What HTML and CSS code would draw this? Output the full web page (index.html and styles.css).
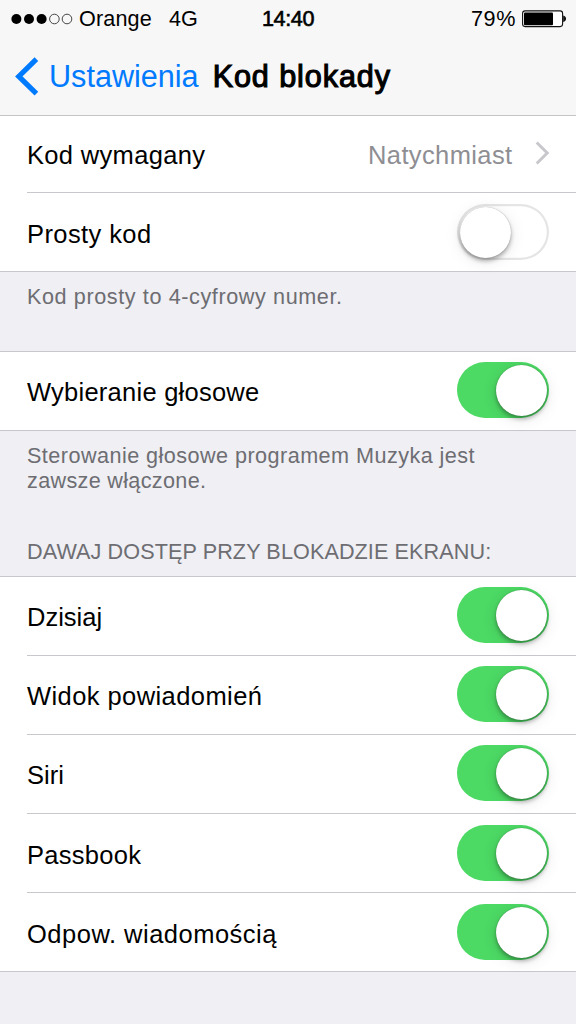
FILE: index.html
```html
<!DOCTYPE html>
<html lang="pl">
<head>
<meta charset="utf-8">
<title>Kod blokady</title>
<link rel="stylesheet" href="styles.css">
</head>
<body>
<header class="top">
  <div class="status">
    <div class="carrier">
      <svg class="signal" width="62" height="14" viewBox="0 0 62 14"><g fill="#000"><circle cx="5.4" cy="7" r="5"/><circle cx="18" cy="7" r="5"/><circle cx="30.6" cy="7" r="5"/></g><g fill="none" stroke="#333" stroke-width=".9"><circle cx="43.4" cy="7" r="4.8"/><circle cx="56" cy="7" r="4.8"/></g></svg>
      <span class="operator">Orange</span><span class="network">4G</span>
    </div>
    <span class="time">14:40</span>
    <div class="power">
      <span class="percent">79%</span>
      <svg width="45" height="18" viewBox="0 0 45 18"><rect x=".6" y=".9" width="40" height="15.7" rx="2.5" fill="#fff" stroke="#111" stroke-width="1.1"/><rect x="2" y="2.4" width="29" height="12.8" rx="1" fill="#000"/><path d="M41.2 5.5C45 6 45 11.5 41.2 12Z" fill="#111"/></svg>
    </div>
  </div>
  <nav class="nav">
    <svg class="back-icon" width="24" height="40" viewBox="0 0 24 40"><path d="M21.4 2.2 3.8 19.4 21.4 36.6" fill="none" stroke="#007aff" stroke-width="5.2"/></svg>
    <a class="back">Ustawienia</a>
    <h1 class="title">Kod blokady</h1>
  </nav>
</header>
<main>
  <section class="group first">
    <div class="row short"><span class="label l1">Kod wymagany</span><span class="value">Natychmiast</span><svg class="chevron" width="16" height="24" viewBox="0 0 16 24"><path d="M1.7 1.5 12.2 12 1.7 22.5" fill="none" stroke="#c7c7cc" stroke-width="3"/></svg></div>
    <div class="row"><span class="label l2">Prosty kod</span><span class="switch"><i class="knob"></i></span></div>
  </section>
  <p class="note small"><span class="n1">Kod prosty to 4-cyfrowy numer.</span></p>
  <section class="group">
    <div class="row"><span class="label l3">Wybieranie głosowe</span><span class="switch on"><i class="knob"></i></span></div>
  </section>
  <div class="between">
    <p class="note"><span class="n2">Sterowanie głosowe programem Muzyka jest</span><br><span class="n3">zawsze włączone.</span></p>
    <h2 class="heading">DAWAJ DOSTĘP PRZY BLOKADZIE EKRANU:</h2>
  </div>
  <section class="group">
    <div class="row"><span class="label l4">Dzisiaj</span><span class="switch on"><i class="knob"></i></span></div>
    <div class="row"><span class="label l5">Widok powiadomień</span><span class="switch on"><i class="knob"></i></span></div>
    <div class="row"><span class="label l6">Siri</span><span class="switch on"><i class="knob"></i></span></div>
    <div class="row lower"><span class="label l7">Passbook</span><span class="switch on"><i class="knob"></i></span></div>
    <div class="row lower"><span class="label l8">Odpow. wiadomością</span><span class="switch on"><i class="knob"></i></span></div>
  </section>
</main>
</body>
</html>
```
FILE: styles.css
```css
* { box-sizing: border-box; }
body { margin: 0; height: 1024px; overflow: hidden; background: #efeff4; color: #000; font-family: "Liberation Sans", Arial, sans-serif; }
h1, h2, p { margin: 0; font-weight: 400; }
svg { display: block; flex: none; }
span, a, h1, h2 { white-space: nowrap; }
.top { height: 116px; background: #f7f7f7; border-bottom: 1px solid #c4c4c6; }
.status { height: 38px; padding: 0 9px 0 11px; display: grid; grid-template-columns: 1fr auto 1fr; align-items: center; font-size: 21.6px; line-height: 38px; }
.carrier, .power { display: flex; align-items: center; }
.power { justify-content: flex-end; gap: 6px; }
.operator { margin-left: 6px; letter-spacing: .15px; }
.network { margin-left: 17px; }
.time { margin-right: 2px; letter-spacing: -.4px; -webkit-text-stroke: .6px #000; }
.percent { letter-spacing: .6px; }
.nav { height: 77px; padding-left: 15px; display: flex; align-items: center; font-size: 30.6px; line-height: 77px; }
.back { margin-left: 10px; color: #007aff; }
.title { margin-left: 14px; font-size: 30.6px; letter-spacing: .9px; -webkit-text-stroke: 1.1px #000; }
.group { background: #fff; border-top: 1px solid #c8c7cc; border-bottom: 1px solid #c8c7cc; }
.first { border-top: 0; }
.row { height: 79px; margin-left: 27px; padding: 10px 27px 0 0; display: flex; align-items: flex-start; border-bottom: 1px solid #c8c7cc; }
.row:last-child { height: 78px; border-bottom: 0; }
.first .row:last-child, .lower { padding-top: 11px; }
.short { height: 77px; padding-top: 9px; }
.label { margin-right: auto; font-size: 25.5px; line-height: 61px; }
.l1 { letter-spacing: .33px; }
.l2 { letter-spacing: .4px; }
.l3 { letter-spacing: .25px; }
.l5 { letter-spacing: .42px; }
.l7 { letter-spacing: .27px; }
.l8 { letter-spacing: .5px; }
.value { font-size: 25.5px; line-height: 61px; letter-spacing: .38px; color: #8e8e93; }
.chevron { margin: 16px -2px 0 22.5px; }
.switch { flex: none; width: 92px; height: 56px; border-radius: 28px; padding: 2.5px; display: flex; background: #fff; box-shadow: inset 0 0 0 2.2px #e5e5e5; }
.knob { width: 51px; height: 51px; border-radius: 50%; background: #fff; box-shadow: 0 3px 4px rgba(0,0,0,.3), 0 0 1px rgba(0,0,0,.35), 0 3px 16px rgba(0,0,0,.1); }
.on { justify-content: flex-end; background: #4cd964; box-shadow: none; }
.note { padding-left: 27px; font-size: 21.6px; line-height: 25.5px; color: #6d6d72; }
.n1 { letter-spacing: .6px; }
.n2 { letter-spacing: .46px; }
.n3 { letter-spacing: .33px; }
.small { height: 79px; padding-top: 12px; }
.between { height: 145px; padding-top: 11.5px; display: flex; flex-direction: column; }
.heading { margin: auto 0 11px 27px; font-size: 21.6px; line-height: 26px; letter-spacing: .1px; color: #6d6d72; }
```
